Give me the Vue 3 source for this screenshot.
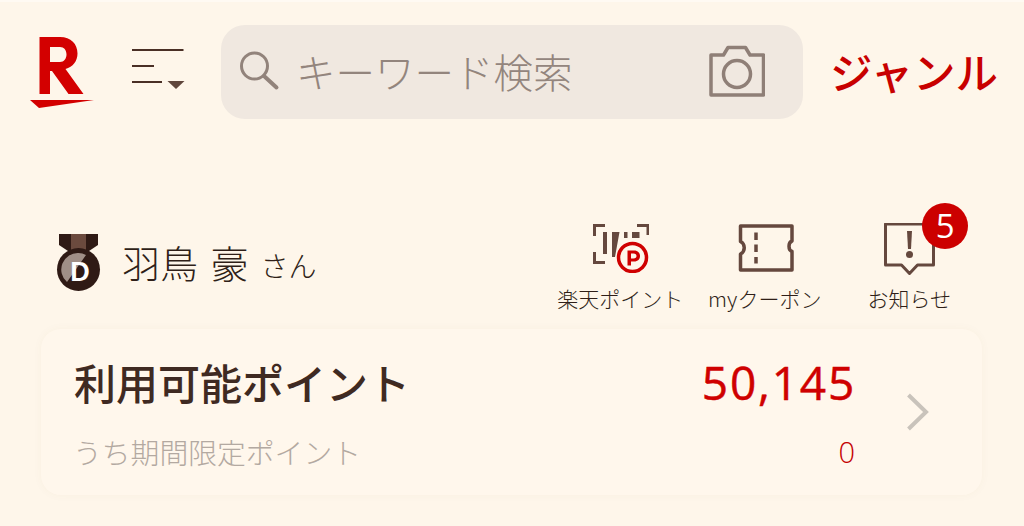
<script setup>
const shortcuts = [
  { id: 'point', label: '楽天ポイント' },
  { id: 'coupon', label: 'myクーポン' },
  { id: 'notice', label: 'お知らせ' }
]
</script>

<template>
  <div class="page">
    <header class="header">
      <svg class="logo" width="64" height="72" viewBox="30 37 64 72">
        <path fill="#d30000" fill-rule="evenodd" d="M39.500 37H60C71 37 77.500 44 77.500 53.500C77.500 61 73 67 65.500 69L83.500 94H68.500L52 71H50V94H39.500ZM50 47V62H60C64 62 66.500 58.500 66.500 54.500C66.500 50 64 47 60 47Z"/>
        <path fill="#d30000" d="M30 100H94L39 108Z"/>
      </svg>
      <svg class="menu" width="54" height="42" viewBox="131 48 54 42">
        <path d="M132 49H183.500M132 65H154M132 81H162" stroke="#4a2f25" stroke-width="2" fill="none"/>
        <path d="M167.500 80H184.500L176 88Z" fill="#5f463c"/>
      </svg>
      <div class="search">
        <svg class="search-icon" width="40" height="44" viewBox="240 52 40 44">
          <circle cx="254.500" cy="67" r="13" fill="none" stroke="#92837b" stroke-width="3"/>
          <path d="M264 77L276.500 88.500" stroke="#92837b" stroke-width="4" stroke-linecap="round"/>
        </svg>
        <span class="placeholder">キーワード検索</span>
        <svg class="camera" width="56" height="52" viewBox="709.500 45 56 52">
          <path d="M711.500 55H724L728.500 47.500H746L750.500 55H764V95H711.500Z" fill="none" stroke="#8f7f77" stroke-width="3.500" stroke-linejoin="round"/>
          <circle cx="737.500" cy="74" r="13.500" fill="none" stroke="#8f7f77" stroke-width="3.500"/>
        </svg>
      </div>
      <span class="genre">ジャンル</span>
    </header>

    <section class="user-row">
      <div class="user">
        <svg class="medal" width="46" height="60" viewBox="56 234 46 60">
          <path d="M59 235H98V246L89 252H68L59 246Z" fill="#2f1a15"/>
          <path d="M71 235H86V252H71Z" fill="#6b4a3e"/>
          <circle cx="78.500" cy="270.500" r="21.500" fill="#2f1a15"/>
          <path d="M78.500 254A16.500 16.500 0 0 0 67 283L86 256A16.500 16.500 0 0 0 78.500 254Z" fill="#a08f87"/>
          <text x="80" y="282" text-anchor="middle" class="medal-d">D</text>
        </svg>
        <span class="name">羽鳥 豪</span>
        <span class="honorific">さん</span>
      </div>
      <nav class="shortcuts">
        <div v-for="s in shortcuts" :key="s.id" class="shortcut">
          <div class="shortcut-icon">
            <svg v-if="s.id === 'point'" width="58" height="50" viewBox="591 224 58 50">
              <path d="M605 226.500H594.500V237M637 226.500H648V236M594.500 253V263.500H605" fill="none" stroke="#65483e" stroke-width="3"/>
              <path d="M603 233H607V255H603ZM612 233H619.500L615 258H612ZM624 233H627.500V239H624ZM632 233H639.500V239H632Z" fill="#65483e"/>
              <circle cx="632.500" cy="258.500" r="14" fill="#fef6ea" stroke="#cf0000" stroke-width="3.500"/>
              <path fill="#cf0000" fill-rule="evenodd" d="M627.500 251.500H634C638 251.500 640 254 640 257C640 260 638 262.500 634 262.500H631V266.500H627.500ZM631 254.500V259.500H633.500C635.500 259.500 636.500 258.500 636.500 257C636.500 255.500 635.500 254.500 633.500 254.500Z"/>
            </svg>
            <svg v-else-if="s.id === 'coupon'" width="58" height="50" viewBox="735.500 224 58 50">
              <path d="M740 227H791.500V242C787.500 243.500 787.500 251 791.500 252.500V271H740V255C745 252.500 745 245 740 242.500Z" fill="none" stroke="#65483e" stroke-width="3.500" stroke-linejoin="round"/>
              <path d="M755.500 233.500V241M755.500 245.500V253M755.500 258V264.500" stroke="#65483e" stroke-width="3.500" fill="none"/>
            </svg>
            <svg v-else width="52" height="54" viewBox="883.500 224 52 54">
              <path d="M886 225H934V266H918L910 274.500L902 266H886Z" fill="none" stroke="#65483e" stroke-width="3" stroke-linejoin="round"/>
              <path d="M907.500 232H912.500L911.500 250H908.500Z" fill="#65483e"/>
              <circle cx="910" cy="255.500" r="3.500" fill="#65483e"/>
            </svg>
            <span v-if="s.id === 'notice'" class="badge">5</span>
          </div>
          <span class="shortcut-label">{{ s.label }}</span>
        </div>
      </nav>
    </section>

    <section class="card">
      <div class="card-body">
        <div class="line main-line">
          <span class="main-label">利用可能ポイント</span>
          <span class="main-value">50,145</span>
        </div>
        <div class="line sub-line">
          <span class="sub-label">うち期間限定ポイント</span>
          <span class="sub-value">0</span>
        </div>
      </div>
      <svg class="chevron" width="24" height="38" viewBox="0 0 24 38">
        <path d="M2.500 2L20 19L2.500 36" fill="none" stroke="#c9c3bb" stroke-width="4"/>
      </svg>
    </section>
  </div>
</template>

<style scoped>
.page {
  width: 1024px;
  height: 526px;
  box-sizing: border-box;
  overflow: hidden;
  background: #fef6ea;
  border-top: 2px solid #fffaf3;
  font-family: "Noto Sans CJK JP", "Noto Sans", sans-serif;
  color: #3f2a22;
}
.header {
  display: flex;
  align-items: center;
  height: 94px;
  margin-top: 23px;
  padding-left: 30px;
}
.logo { flex: none; margin-top: 2px; }
.menu { flex: none; margin-left: 37px; margin-top: -4px; }
.search {
  flex: none;
  display: flex;
  align-items: center;
  width: 582px;
  height: 94px;
  margin-left: 36px;
  border-radius: 24px;
  background: #f0e8e0;
  padding: 0 38px 0 19px;
  box-sizing: border-box;
}
.search-icon { flex: none; margin-top: 2px; }
.placeholder {
  margin-left: 16px;
  margin-bottom: 3px;
  font-size: 39.500px;
  font-weight: 300;
  color: #93857d;
  line-height: 1;
}
.camera { flex: none; margin-left: auto; margin-top: -2px; }
.genre {
  margin-left: 27px;
  margin-bottom: 2px;
  font-size: 42.500px;
  font-weight: 500;
  line-height: 1;
  color: #c80000;
}
.user-row {
  display: flex;
  justify-content: space-between;
  height: 103px;
  margin-top: 104px;
  padding-left: 56px;
  padding-right: 43px;
}
.user {
  display: flex;
  align-items: center;
  height: 60px;
  margin-top: 10px;
}
.medal { flex: none; }
.name {
  margin-left: 20px;
  margin-bottom: 3px;
  font-size: 38px;
  font-weight: 300;
  line-height: 1;
  word-spacing: 4px;
  color: #2f1f18;
}
.honorific {
  margin-left: 12px;
  font-size: 28px;
  font-weight: 300;
  line-height: 1;
  margin-top: 4px;
  color: #2f1f18;
}
.shortcuts { display: flex; }
.shortcut {
  width: 144.500px;
  display: flex;
  flex-direction: column;
  align-items: center;
  padding-left: 1px;
  box-sizing: border-box;
}
.shortcut-icon {
  position: relative;
  height: 54px;
  display: flex;
  align-items: flex-start;
}
.badge {
  position: absolute;
  top: -20px;
  right: -33px;
  width: 46px;
  height: 46px;
  border-radius: 50%;
  background: #cc0000;
  color: #fff;
  font-family: "Open Sans", sans-serif;
  font-size: 33px;
  line-height: 46px;
  text-align: center;
}
.shortcut-label {
  margin-top: 7px;
  font-size: 21px;
  font-weight: 300;
  line-height: 28px;
  white-space: nowrap;
  color: #2f1f18;
}
.card {
  display: flex;
  align-items: center;
  width: 941px;
  height: 166px;
  margin: 3px 0 0 41px;
  box-sizing: border-box;
  padding: 0 52px 0 33px;
  border-radius: 20px;
  background: #fff7ec;
  box-shadow: 0 0 10px rgba(120, 90, 50, 0.04);
}
.card-body { flex: 1; min-width: 0; }
.line {
  display: flex;
  justify-content: space-between;
  align-items: center;
  padding-right: 51px;
}
.main-label {
  font-size: 42px;
  font-weight: 500;
  line-height: 60px;
  color: #3f2a22;
}
.main-value {
  font-family: "Open Sans", sans-serif;
  font-size: 46px;
  font-weight: 500;
  -webkit-text-stroke: 0.5px #cf0000;
  letter-spacing: 1.800px;
  margin-right: -1px;
  line-height: 60px;
  color: #cf0000;
}
.sub-line { margin-top: 20px; }
.sub-label {
  margin-left: -1px;
  font-size: 28.800px;
  font-weight: 300;
  line-height: 40px;
  color: #b3a9a1;
}
.sub-value {
  font-family: "Open Sans", sans-serif;
  font-size: 29px;
  font-weight: 300;
  line-height: 40px;
  color: #c40000;
}
.chevron { flex: none; }
.medal-d {
  font-family: "Liberation Sans", sans-serif;
  font-size: 27px;
  font-weight: 700;
  fill: #fff;
}
</style>
